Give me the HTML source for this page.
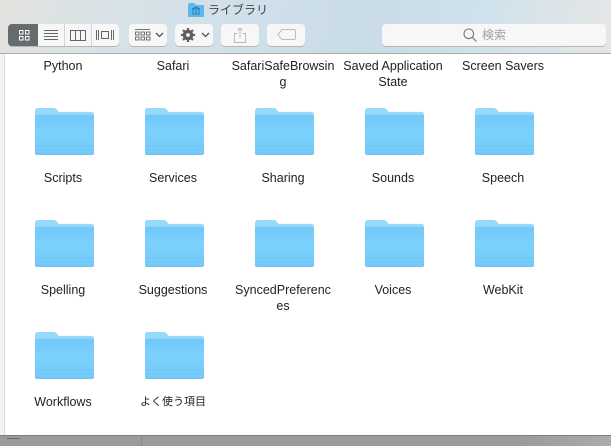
<!DOCTYPE html>
<html><head><meta charset="utf-8"><style>
html,body{margin:0;padding:0;width:611px;height:446px;overflow:hidden;background:#fff}
body{position:relative;font-family:"Liberation Sans","Noto Sans CJK JP",sans-serif;color:#222}
.tb{position:absolute;left:0;top:0;width:611px;height:53px;background:linear-gradient(100deg,#e2e2de 0%,#d8e2e6 18%,#cfe0ea 42%,#c9dbe6 60%,#cfe2ec 78%,#e6e6e6 100%);border-bottom:1px solid #a9adaf}
.side{position:absolute;left:0;top:54px;width:4px;height:381px;background:#f3f3f3;border-right:1px solid #dcdcdc}
.bot{position:absolute;left:0;top:435px;width:611px;height:11px;background:linear-gradient(90deg,#9b9b9b 85%,#ababab 100%);border-top:1px solid #7d7d7d;box-sizing:border-box}
.btn{position:absolute;top:24px;height:22px;background:#f7f7f7;border-radius:4px;box-shadow:0 1px 0 #b5b8ba}
.l{position:absolute;width:108px;margin-left:-1px;text-align:center;font-size:12.5px;line-height:16px;word-break:break-all;color:#222}
.f{position:absolute;width:59px;height:47px;filter:blur(.35px)}
svg{position:absolute;display:block}
</style></head><body>
<div class="tb"></div>
<svg style="left:188px;top:2px" width="16" height="15" viewBox="0 0 16 15"><path d="M0 3Q0 1 2 1H6L8 3H15Q16 3 16 4V14Q16 15 15 15H1Q0 15 0 14Z" fill="#5cb8ee"/><path d="M4 7L8 5L12 7ZM5 8V11M8 8V11M11 8V11M4 12H12" stroke="#2a7cb5" fill="none"/></svg>
<div style="position:absolute;left:208px;top:2px;font-size:12px;line-height:16px;color:#444">ライブラリ</div>
<div class="btn" style="left:8px;width:111px"></div>
<div style="position:absolute;left:8px;top:24px;width:30px;height:22px;background:#666b6e;border-radius:4px 0 0 4px"></div>
<div style="position:absolute;left:64px;top:24px;width:1px;height:22px;background:#d5d5d5"></div>
<div style="position:absolute;left:91px;top:24px;width:1px;height:22px;background:#d5d5d5"></div>
<svg style="left:18px;top:29px" width="12" height="12" viewBox="0 0 12 12" fill="none" stroke="#fff"><rect x="1.5" y="1.5" width="3.5" height="3.5"/><rect x="7.5" y="1.5" width="3.5" height="3.5"/><rect x="1.5" y="7.5" width="3.5" height="3.5"/><rect x="7.5" y="7.5" width="3.5" height="3.5"/></svg>
<svg style="left:43px;top:29px" width="16" height="12" viewBox="0 0 16 12" stroke="#666"><path d="M1 1.5H15M1 4.5H15M1 7.5H15M1 10.5H15"/></svg>
<svg style="left:70px;top:30px" width="16" height="11" viewBox="0 0 16 11" fill="none" stroke="#666"><rect x=".5" y=".5" width="15" height="10"/><path d="M5.5 0V11M10.5 0V11"/></svg>
<svg style="left:95px;top:29px" width="20" height="12" viewBox="0 0 20 12" fill="none" stroke="#666"><rect x="6.5" y="2.5" width="7" height="7"/><path d="M1.5 1V11M3.5 1V11M16.5 1V11M18.5 1V11"/></svg>
<div class="btn" style="left:129px;width:38px"></div>
<svg style="left:135px;top:29px" width="16" height="13" viewBox="0 0 16 13" fill="none" stroke="#666" stroke-width=".9"><path d="M0 .5H15"/><rect x=".5" y="3" width="3.5" height="3"/><rect x="6" y="3" width="3.5" height="3"/><rect x="11.5" y="3" width="3.5" height="3"/><rect x=".5" y="8" width="3.5" height="3"/><rect x="6" y="8" width="3.5" height="3"/><rect x="11.5" y="8" width="3.5" height="3"/></svg>
<svg style="left:155px;top:32px" width="9" height="6" viewBox="0 0 9 6" fill="none" stroke="#555" stroke-width="1.3"><path d="M1 1L4.500 4.500L8 1"/></svg>
<div class="btn" style="left:175px;width:38px"></div>
<svg style="left:181px;top:28px" width="14" height="14" viewBox="0 0 14 14"><circle cx="7" cy="7" r="3.800" fill="none" stroke="#5f5f5f" stroke-width="3"/><path d="M7 0V14M0 7H14M2 2L12 12M12 2L2 12" stroke="#5f5f5f" stroke-width="2.200"/><circle cx="7" cy="7" r="1.900" fill="#f7f7f7"/></svg>
<svg style="left:201px;top:32px" width="9" height="6" viewBox="0 0 9 6" fill="none" stroke="#555" stroke-width="1.300"><path d="M1 1L4.500 4.500L8 1"/></svg>
<div class="btn" style="left:221px;width:38px"></div>
<svg style="left:233px;top:27px" width="14" height="16" viewBox="0 0 14 16" fill="none" stroke="#bcbcbc"><path d="M4.500 6.500H1.500V15.500H12.500V6.500H9.500M7 11V1M4.500 3.500L7 1L9.500 3.500"/></svg>
<div class="btn" style="left:267px;width:38px"></div>
<svg style="left:277px;top:29px" width="19" height="11" viewBox="0 0 19 11" fill="none" stroke="#bcbcbc"><path d="M5 .5H17Q18.500 .5 18.500 2V9Q18.500 10.500 17 10.500H5L.8 5.500Z"/></svg>
<div class="btn" style="left:382px;width:224px"></div>
<svg style="left:463px;top:28px" width="14" height="14" viewBox="0 0 14 14" fill="none" stroke="#777" stroke-width="1.100"><circle cx="5.800" cy="5.800" r="4.800"/><path d="M9.300 9.300L13.500 13.500"/></svg>
<div style="position:absolute;left:482px;top:27px;font-size:12px;line-height:16px;color:#a0a0a0">検索</div>
<div class="side"></div>
<div class="bot"></div>
<div style="position:absolute;left:7px;top:438px;width:13px;height:1px;background:#6c6c6c"></div>
<div style="position:absolute;left:141px;top:436px;width:1px;height:10px;background:#8a8a8a"></div>

<div class="l" style="left:10px;top:58px">Python</div>
<div class="l" style="left:120px;top:58px">Safari</div>
<div class="l" style="left:230px;top:58px">SafariSafeBrowsin<br>g</div>
<div class="l" style="left:340px;top:58px;word-break:normal">Saved Application<br>State</div>
<div class="l" style="left:450px;top:58px">Screen Savers</div>

<svg width="0" height="0" style="position:absolute"><defs>
<linearGradient id="g" x1="0" y1="0" x2="0" y2="1"><stop offset="0" stop-color="#72c8f7"/><stop offset=".45" stop-color="#7cd1fd"/><stop offset="1" stop-color="#74caf9"/></linearGradient>
<symbol id="fd" viewBox="0 0 60 48" preserveAspectRatio="none"><path d="M0 3Q0 0 3 0H19Q21 0 22.500 2L24 4H57Q60 4 60 7V45Q60 48 57 48H3Q0 48 0 45Z" fill="#97d9fa"/><path d="M0 9Q0 7 2 7H58Q60 7 60 9V45Q60 47 58 47H2Q0 47 0 45Z" fill="url(#g)"/><path d="M0 39H60M0 42.500H60" stroke="#6cc0ef" stroke-width=".6"/><path d="M0 45Q0 47.500 2.500 47.500H57.500Q60 47.500 60 45" fill="none" stroke="#68b8e6" stroke-width=".8"/></symbol>
</defs></svg>

<svg class="f" style="left:35px;top:108px"><use href="#fd"/></svg>
<svg class="f" style="left:145px;top:108px"><use href="#fd"/></svg>
<svg class="f" style="left:255px;top:108px"><use href="#fd"/></svg>
<svg class="f" style="left:365px;top:108px"><use href="#fd"/></svg>
<svg class="f" style="left:475px;top:108px"><use href="#fd"/></svg>
<div class="l" style="left:10px;top:170px">Scripts</div>
<div class="l" style="left:120px;top:170px">Services</div>
<div class="l" style="left:230px;top:170px">Sharing</div>
<div class="l" style="left:340px;top:170px">Sounds</div>
<div class="l" style="left:450px;top:170px">Speech</div>

<svg class="f" style="left:35px;top:220px"><use href="#fd"/></svg>
<svg class="f" style="left:145px;top:220px"><use href="#fd"/></svg>
<svg class="f" style="left:255px;top:220px"><use href="#fd"/></svg>
<svg class="f" style="left:365px;top:220px"><use href="#fd"/></svg>
<svg class="f" style="left:475px;top:220px"><use href="#fd"/></svg>
<div class="l" style="left:10px;top:282px">Spelling</div>
<div class="l" style="left:120px;top:282px">Suggestions</div>
<div class="l" style="left:230px;top:282px">SyncedPreferenc<br>es</div>
<div class="l" style="left:340px;top:282px">Voices</div>
<div class="l" style="left:450px;top:282px">WebKit</div>

<svg class="f" style="left:35px;top:332px"><use href="#fd"/></svg>
<svg class="f" style="left:145px;top:332px"><use href="#fd"/></svg>
<div class="l" style="left:10px;top:394px">Workflows</div>
<div class="l" style="left:120px;top:394px;font-size:11px">よく使う項目</div>
</body></html>
